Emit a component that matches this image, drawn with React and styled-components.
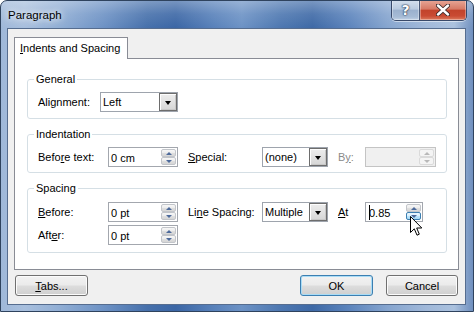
import React from 'react';
import styled, { createGlobalStyle } from 'styled-components';

const Global = createGlobalStyle`
  html, body { margin: 0; padding: 0; background: #ffffff; }
  body { font-family: "Liberation Sans", Arial, sans-serif; font-size: 11px; color: #000; }
  * { box-sizing: border-box; }
`;

const Window = styled.div`
  position: relative;
  width: 474px;
  height: 312px;
  border: 1px solid #2f435e;
  border-radius: 7px 7px 0 0;
  overflow: hidden;
  display: flex;
  flex-direction: column;
  background:
    linear-gradient(180deg, rgba(255,255,255,0.30) 0px, rgba(255,255,255,0.10) 13px, rgba(255,255,255,0) 27px),
    linear-gradient(90deg, #9fb8d9 0%, #a8bfdd 5%, #92afd5 12%, #6c91c4 22%, #4670ab 31%, #3b66a5 37%, #5881ba 45%, #6c92c5 51%, #4e78b1 59%, #3e69a6 66%, #5d85bd 74%, #86a5cf 82%, #a0b8d9 90%, #aac1de 96%, #6f8fbe 100%);
`;

const TitleBar = styled.div`
  height: 27px;
  display: flex;
  align-items: flex-start;
  padding-left: 7px;
  flex: none;
`;

const Title = styled.div`
  padding-top: 7px;
  line-height: 14px;
  font-size: 11.5px;
  color: #000;
  text-shadow: 0 0 6px rgba(255,255,255,0.95), 0 0 10px rgba(255,255,255,0.7);
`;

const Controls = styled.div`
  margin-left: auto;
  margin-right: 6px;
  margin-top: -1px;
  display: flex;
  height: 21px;
  border: 1px solid #38496a;
  border-top: none;
  border-radius: 0 0 5px 5px;
  overflow: hidden;
  box-shadow: 0 1px 0 rgba(255,255,255,0.5);
`;

const CtrlButton = styled.div`
  width: ${p => p.$w}px;
  height: 100%;
  display: flex;
  align-items: center;
  justify-content: center;
  border-left: ${p => (p.$first ? 'none' : '1px solid #4a5a78')};
  box-shadow: inset 0 0 0 1px rgba(255,255,255,0.35);
  background: ${p =>
    p.$close
      ? 'linear-gradient(180deg, #e8a898 0%, #d77a66 45%, #c2432b 52%, #c94b33 80%, #dc7b5e 100%)'
      : 'linear-gradient(180deg, #d5e0ee 0%, #b9cae0 45%, #9bb1ce 52%, #a7bcd6 85%, #c4d3e6 100%)'};
`;

const HelpGlyph = styled.span`
  font-family: "DejaVu Sans", sans-serif;
  font-weight: bold;
  font-size: 14px;
  line-height: 14px;
  color: #fff;
  text-shadow: 0 0 1px #2a3a55, 0 0 1px #2a3a55, 0 0 2px #2a3a55;
`;

const Client = styled.div`
  flex: 1;
  margin: 0 7px 6px 6px;
  background: #f0f0f0;
  border: 1px solid #566d8f;
  padding: 8px 6px 8px 6px;
  display: flex;
  flex-direction: column;
`;

const TabStrip = styled.div`
  display: flex;
  height: 22px;
  margin-bottom: -1px;
  position: relative;
  z-index: 1;
`;

const Tab = styled.div`
  width: 114px;
  height: 22px;
  background: #fff;
  border: 1px solid #898c95;
  border-bottom: none;
  padding: 3px 0 0 5px;
  line-height: 14px;
`;

const Panel = styled.div`
  height: 212px;
  background: #fff;
  border: 1px solid #898c95;
  padding: 13px 11px 0 12px;
  display: flex;
  flex-direction: column;
  gap: 8px;
`;

const Group = styled.fieldset`
  margin: 0;
  border: 1px solid #d5dfe5;
  border-radius: 3px;
  padding: ${p => p.$pt}px 8px ${p => p.$pb}px 10px;
  display: flex;
  flex-direction: column;
  gap: 3px;
  min-width: 0;
`;

const Legend = styled.legend`
  padding: 0 2px;
  margin-left: -4px;
  line-height: 14px;
`;

const Row = styled.div`
  display: flex;
  align-items: center;
  height: 20px;
`;

const Label = styled.span`
  width: ${p => p.$w}px;
  margin-left: ${p => p.$ml || 0}px;
  flex: none;
  white-space: nowrap;
  color: ${p => (p.$disabled ? '#8a8a8a' : '#000')};
`;

const U = styled.span`
  text-decoration: underline;
  text-underline-offset: 1px;
`;

const Select = styled.div`
  width: ${p => p.$w}px;
  height: 20px;
  flex: none;
  display: flex;
  align-items: center;
  background: #fff;
  border: 1px solid #9ea4ad;
  padding-left: 2px;
`;

const SelectText = styled.span`
  flex: 1;
`;

const DropButton = styled.div`
  width: 18px;
  height: 18px;
  border: 1px solid #6d6d6d;
  box-shadow: inset 1px 1px 0 #fdfdfd, inset -1px -1px 0 #c8c8c8;
  background: linear-gradient(180deg, #ededed 0%, #e2e2e2 50%, #d6d6d6 100%);
  display: flex;
  align-items: center;
  justify-content: center;
`;

const DownTri = styled.span`
  width: 0;
  height: 0;
  border-left: 3.5px solid transparent;
  border-right: 3.5px solid transparent;
  border-top: 4px solid #000;
  margin-top: 1px;
`;

const Input = styled.div`
  width: ${p => p.$w}px;
  height: 20px;
  flex: none;
  display: flex;
  align-items: stretch;
  background: ${p => (p.$disabled ? '#f0f0f0' : '#fff')};
  border: 1px solid ${p => (p.$disabled ? '#c4c4c4' : '#a3a7ae')};
  padding: 1px 1px 1px 2px;
`;

const InputText = styled.span`
  flex: 1;
  display: flex;
  align-items: center;
  padding-top: 1px;
`;

const Caret = styled.span`
  width: 1px;
  height: 15px;
  background: #000;
  margin-right: -1px;
  margin-left: 1px;
  position: relative;
  z-index: 1;
`;

const Spin = styled.div`
  width: 15px;
  display: flex;
  flex-direction: column;
  gap: 0;
`;

const SpinBtn = styled.div`
  flex: 1;
  display: flex;
  align-items: center;
  justify-content: center;
  border: 1px solid ${p => (p.$hover ? '#3c7fb1' : p.$disabled ? '#dadada' : '#c2c5ca')};
  border-radius: 2px;
  background: ${p =>
    p.$hover
      ? 'linear-gradient(180deg, #eaf6fd 0%, #d9f0fc 50%, #bee6fd 51%, #a7d9f5 100%)'
      : p.$disabled
      ? '#f4f4f4'
      : 'linear-gradient(180deg, #f7f7f7 0%, #ececec 50%, #dfdfdf 51%, #d6d6d6 100%)'};
`;

const SpinTri = styled.span`
  width: 0;
  height: 0;
  border-left: 3px solid transparent;
  border-right: 3px solid transparent;
  ${p => (p.$up ? 'border-bottom' : 'border-top')}: 3px solid ${p => (p.$disabled ? '#b8b8b8' : '#4d6a9b')};
`;

const ButtonRow = styled.div`
  display: flex;
  margin-top: 5px;
  padding: 0 1px;
`;

const Button = styled.div`
  width: ${p => p.$w}px;
  height: 21px;
  margin-left: ${p => (p.$auto ? 'auto' : `${p.$ml || 0}px`)};
  display: flex;
  align-items: center;
  justify-content: center;
  border: 1px solid ${p => (p.$default ? '#3c7fb1' : '#707070')};
  border-radius: 3px;
  box-shadow: inset 0 0 0 1px ${p => (p.$default ? '#a9dcf6' : '#fbfbfb')};
  background: linear-gradient(180deg, #f2f2f2 0%, #ebebeb 48%, #dddddd 52%, #cfcfcf 100%);
  padding-top: 1px;
`;

const Cursor = styled.svg`
  position: absolute;
  left: 409px;
  top: 215px;
  z-index: 5;
`;

function Spinner({ hoverDown, disabled }) {
  return (
    <Spin>
      <SpinBtn $disabled={disabled}>
        <SpinTri $up $disabled={disabled} />
      </SpinBtn>
      <SpinBtn $hover={hoverDown} $disabled={disabled}>
        <SpinTri $disabled={disabled} />
      </SpinBtn>
    </Spin>
  );
}

function Combo({ w, value }) {
  return (
    <Select $w={w}>
      <SelectText>{value}</SelectText>
      <DropButton>
        <DownTri />
      </DropButton>
    </Select>
  );
}

export default function App() {
  return (
    <>
      <Global />
      <Window>
        <TitleBar>
          <Title>Paragraph</Title>
          <Controls>
            <CtrlButton $w={27} $first>
              <HelpGlyph>?</HelpGlyph>
            </CtrlButton>
            <CtrlButton $w={47} $close>
              <svg width="14" height="12" viewBox="0 0 14 12">
                <path d="M2 1.5 L12 10.5 M12 1.5 L2 10.5" stroke="#3a2a2a" strokeWidth="4.2" strokeLinecap="round" />
                <path d="M2 1.5 L12 10.5 M12 1.5 L2 10.5" stroke="#ffffff" strokeWidth="2.4" strokeLinecap="round" />
              </svg>
            </CtrlButton>
          </Controls>
        </TitleBar>
        <Client>
          <TabStrip>
            <Tab>
              <U>I</U>ndents and Spacing
            </Tab>
          </TabStrip>
          <Panel>
            <Group $pt={6} $pb={6}>
              <Legend>General</Legend>
              <Row>
                <Label $w={62}>Alignment:</Label>
                <Combo w={78} value="Left" />
              </Row>
            </Group>
            <Group $pt={6} $pb={5}>
              <Legend>Indentation</Legend>
              <Row>
                <Label $w={70}>
                  Befo<U>r</U>e text:
                </Label>
                <Input $w={70}>
                  <InputText>0 cm</InputText>
                  <Spinner />
                </Input>
                <Label $w={74} $ml={10}>
                  <U>S</U>pecial:
                </Label>
                <Combo w={66} value="(none)" />
                <Label $w={27} $ml={10} $disabled>
                  B<U>y</U>:
                </Label>
                <Input $w={71} $disabled>
                  <InputText />
                  <Spinner disabled />
                </Input>
              </Row>
            </Group>
            <Group $pt={7} $pb={7}>
              <Legend>Spacing</Legend>
              <Row>
                <Label $w={70}>
                  <U>B</U>efore:
                </Label>
                <Input $w={70}>
                  <InputText>0 pt</InputText>
                  <Spinner />
                </Input>
                <Label $w={74} $ml={10}>
                  Li<U>n</U>e Spacing:
                </Label>
                <Combo w={66} value="Multiple" />
                <Label $w={27} $ml={10}>
                  <U>A</U>t
                </Label>
                <Input $w={58}>
                  <InputText>
                    <Caret />0.85
                  </InputText>
                  <Spinner hoverDown />
                </Input>
              </Row>
              <Row>
                <Label $w={70}>
                  Aft<U>e</U>r:
                </Label>
                <Input $w={70}>
                  <InputText>0 pt</InputText>
                  <Spinner />
                </Input>
              </Row>
            </Group>
          </Panel>
          <ButtonRow>
            <Button $w={73}>
              <span>
                <U>T</U>abs...
              </span>
            </Button>
            <Button $w={73} $auto $default>
              OK
            </Button>
            <Button $w={72} $ml={13}>
              Cancel
            </Button>
          </ButtonRow>
        </Client>
        <Cursor width="13" height="21" viewBox="0 0 13 21">
          <path
            d="M0.5 0.5 L0.5 16.5 L4.3 12.8 L7 19.2 L9.3 18.2 L6.7 12 L11.8 12 Z"
            fill="#ffffff"
            stroke="#000000"
            strokeWidth="1"
            strokeLinejoin="miter"
          />
        </Cursor>
      </Window>
    </>
  );
}
